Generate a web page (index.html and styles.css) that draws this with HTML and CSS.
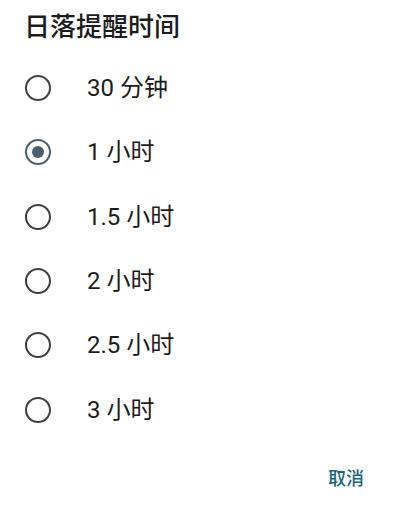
FILE: index.html
```html
<!DOCTYPE html>
<html>
<head>
    <link rel="stylesheet" href="styles.css">
</head>
<body>
    <div class="dialog">
        <h1 class="title">日落提醒时间</h1>
        <div class="options">
            <label class="option"><span class="radio"></span><span class="label">30 分钟</span></label>
            <label class="option"><span class="radio checked"></span><span class="label">1 小时</span></label>
            <label class="option"><span class="radio"></span><span class="label">1.5 小时</span></label>
            <label class="option"><span class="radio"></span><span class="label">2 小时</span></label>
            <label class="option"><span class="radio"></span><span class="label">2.5 小时</span></label>
            <label class="option"><span class="radio"></span><span class="label">3 小时</span></label>
        </div>
        <div class="actions">
            <button class="btn-text">取消</button>
        </div>
    </div>
</body>
</html>
```

FILE: styles.css
```css
body {
    margin: 0;
    background: #fff;
    font-family: Roboto, "Noto Sans CJK SC", sans-serif;
    color: #1c1c1c;
}

.dialog {
    width: 400px;
    height: 508px;
    box-sizing: border-box;
    padding-top: 10px;
}

.title {
    margin: 0;
    padding: 0 24px;
    font-size: 26px;
    font-weight: 500;
    line-height: 34px;
    height: 46px;
}

.options {
    display: flex;
    flex-direction: column;
}

.option {
    display: flex;
    align-items: center;
    height: 64.3px;
    padding-left: 25px;
}

.radio {
    width: 22px;
    height: 22px;
    border: 2.5px solid #3d3f44;
    border-radius: 50%;
    position: relative;
    flex-shrink: 0;
}

.radio.checked {
    border-color: #4b5e6d;
}

.radio.checked::after {
    content: "";
    position: absolute;
    left: 5px;
    top: 5px;
    width: 12px;
    height: 12px;
    border-radius: 50%;
    background: #4b5e6d;
}

.label {
    margin-left: 36px;
    font-size: 24px;
    line-height: 30px;
}

.actions {
    display: flex;
    justify-content: flex-end;
    padding: 14px 24px 0;
}

.btn-text {
    background: none;
    border: none;
    font-family: inherit;
    font-size: 18px;
    font-weight: 500;
    color: #17657e;
    padding: 8px 12px;
}
```
